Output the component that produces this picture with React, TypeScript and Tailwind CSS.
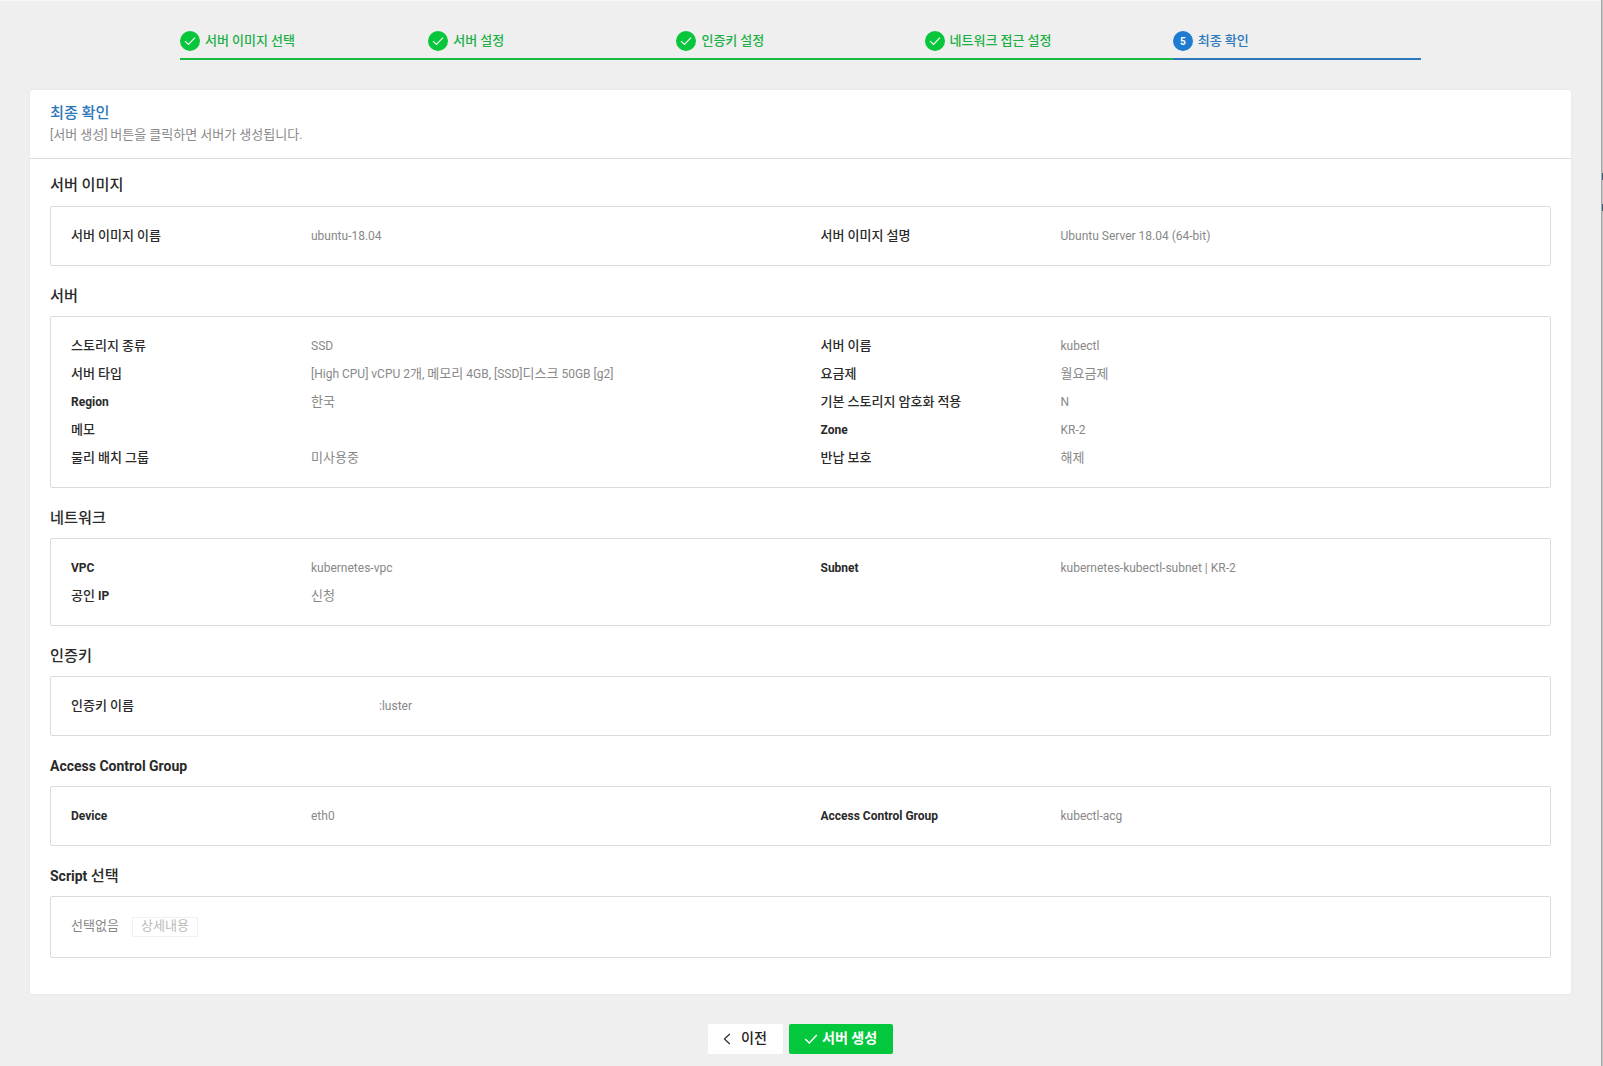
import React from "react";

/* Renders mixed text; Hangul runs are set slightly larger than the Latin text around them. */
function Mixed({ text, hangul = "font-medium" }: { text: string; hangul?: string }) {
  return (
    <>
      {text.split(/([\uac00-\ud7a3]+)/).map((part, i) =>
        i % 2 === 1 ? (
          <span key={i} className={`text-[1.087em] leading-none ${hangul}`}>
            {part}
          </span>
        ) : (
          part
        )
      )}
    </>
  );
}

function Check({ size, stroke }: { size: number; stroke: number }) {
  return (
    <svg width={size} height={size} viewBox="0 0 12 12" fill="none" stroke="currentColor" strokeWidth={stroke}>
      <path d="M1 6.1 4.5 9.5 11 2.6" />
    </svg>
  );
}

const steps = ["서버 이미지 선택", "서버 설정", "인증키 설정", "네트워크 접근 설정", "최종 확인"];

type Item = { label: string; value: string; indent?: boolean };

const sections: { title: string; items: Item[] }[] = [
  {
    title: "서버 이미지",
    items: [
      { label: "서버 이미지 이름", value: "ubuntu-18.04" },
      { label: "서버 이미지 설명", value: "Ubuntu Server 18.04 (64-bit)" },
    ],
  },
  {
    title: "서버",
    items: [
      { label: "스토리지 종류", value: "SSD" },
      { label: "서버 이름", value: "kubectl" },
      { label: "서버 타입", value: "[High CPU] vCPU 2개, 메모리 4GB, [SSD]디스크 50GB [g2]" },
      { label: "요금제", value: "월요금제" },
      { label: "Region", value: "한국" },
      { label: "기본 스토리지 암호화 적용", value: "N" },
      { label: "메모", value: "" },
      { label: "Zone", value: "KR-2" },
      { label: "물리 배치 그룹", value: "미사용중" },
      { label: "반납 보호", value: "해제" },
    ],
  },
  {
    title: "네트워크",
    items: [
      { label: "VPC", value: "kubernetes-vpc" },
      { label: "Subnet", value: "kubernetes-kubectl-subnet | KR-2" },
      { label: "공인 IP", value: "신청" },
    ],
  },
  { title: "인증키", items: [{ label: "인증키 이름", value: ":luster", indent: true }] },
  {
    title: "Access Control Group",
    items: [
      { label: "Device", value: "eth0" },
      { label: "Access Control Group", value: "kubectl-acg" },
    ],
  },
];

function Heading({ text, first = false }: { text: string; first?: boolean }) {
  return (
    <h2
      className={`flex items-center text-[14px] leading-5 font-bold whitespace-pre text-[#2a2a2a] ${
        first ? "h-[47px] pt-1" : "h-[50px] pt-[9px]"
      }`}
    >
      <span>
        <Mixed text={text} />
      </span>
    </h2>
  );
}

export default function App() {
  return (
    <div
      lang="ko"
      className="flex h-[1066px] w-full bg-[#efefef] font-['Roboto','Noto_Sans_CJK_KR',sans-serif] text-[12px]"
    >
      <div className="flex flex-1 flex-col overflow-hidden border-t border-t-[#f8f8f8]">
        <ol className="mt-[30px] ml-[180px] grid w-[1241px] grid-cols-5">
          {steps.map((s, i) => {
            const current = i === 4;
            return (
              <li
                key={s}
                className={`flex h-[29px] items-start border-b-2 ${
                  current ? "border-[#2b78bb] text-[#2b78bb]" : "border-[#1bbb40] text-[#1bb045]"
                }`}
              >
                <span
                  className={`flex size-5 shrink-0 items-center justify-center rounded-full text-[10px] font-bold text-white ${
                    current ? "bg-[#1d7bd0]" : "bg-[#07c63b]"
                  }`}
                >
                  {current ? "5" : <Check size={12} stroke={1.1} />}
                </span>
                <span className="ml-[5px] leading-5 whitespace-pre">
                  <Mixed text={s} />
                </span>
              </li>
            );
          })}
        </ol>

        <main className="mt-[30px] ml-[30px] h-[904px] w-[1541px] rounded-[3px] bg-white shadow-[0_0_1px_1px_#eaeaea]">
          <header className="h-[69px] border-b border-[#dcdcdc] px-5 pt-[13px]">
            <h1 className="text-[14px] leading-5 font-medium text-[#2b78bb]">
              <Mixed text="최종 확인" />
            </h1>
            <p className="mt-[2px] leading-5 text-[#8a8a8a]">
              <Mixed text="[서버 생성] 버튼을 클릭하면 서버가 생성됩니다." hangul="font-normal" />
            </p>
          </header>

          <div className="px-5">
            {sections.map((section, i) => (
              <section key={section.title}>
                <Heading text={section.title} first={i === 0} />
                <dl className="grid grid-cols-2 rounded-[2px] border border-[#dcdcdc] py-[15px]">
                  {section.items.map((item) => (
                    <div key={item.label} className="flex h-7 pl-5">
                      <dt className="w-60 shrink-0 leading-7 font-bold text-[#2a2a2a]">
                        <Mixed text={item.label} />
                      </dt>
                      <dd className={`leading-7 whitespace-pre text-[#888] ${item.indent ? "pl-[68px]" : ""}`}>
                        <Mixed text={item.value} hangul="font-normal" />
                      </dd>
                    </div>
                  ))}
                </dl>
              </section>
            ))}
            <section>
              <Heading text="Script 선택" />
              <div className="flex h-[62px] items-center rounded-[2px] border border-[#dcdcdc] px-5 text-[#888]">
                <span className="pb-[2px]">
                  <Mixed text="선택없음" hangul="font-normal" />
                </span>
                <button className="ml-[13px] flex h-5 w-[66px] items-center justify-center border border-[#f1f1f1] pb-[2px] text-[#bbb]">
                  <Mixed text="상세내용" hangul="font-normal" />
                </button>
              </div>
            </section>
          </div>
        </main>

        <footer className="mt-[30px] ml-[708px] flex gap-[6px]">
          <button className="flex h-[30px] w-[75px] items-center rounded-[2px] bg-white pl-[15px] text-[#222]">
            <svg width="8" height="12" viewBox="0 0 8 12" fill="none" stroke="currentColor" strokeWidth="1.1">
              <path d="M6.8 1 1.4 6l5.4 5" />
            </svg>
            <span className="ml-[10px] text-[13px]">
              <Mixed text="이전" />
            </span>
          </button>
          <button className="flex h-[30px] w-[104px] items-center rounded-[2px] bg-[#03c73c] pl-[15px] text-white">
            <Check size={14} stroke={1.2} />
            <span className="ml-1 text-[13px] whitespace-pre">
              <Mixed text="서버 생성" hangul="font-bold" />
            </span>
          </button>
        </footer>
      </div>

      {/* Window edge */}
      <div className="flex w-[2px] flex-col border-l border-[#a5a5a5] bg-[#c4c4c4]">
        <div className="mt-[173px] h-[7px] bg-[#4a5a78]" />
        <div className="mt-[24px] h-[7px] bg-[#4a5a78]" />
      </div>
    </div>
  );
}
